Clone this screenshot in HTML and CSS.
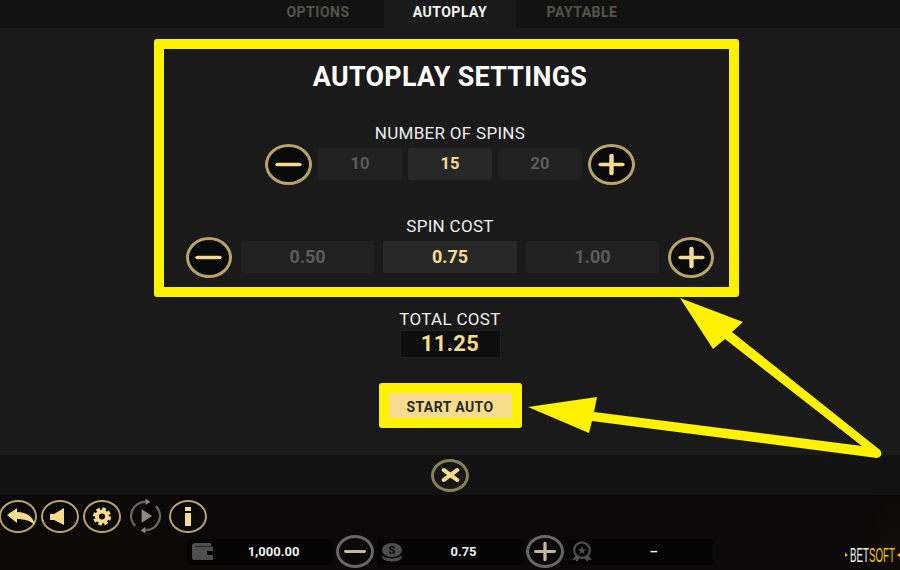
FILE: index.html
```html
<!DOCTYPE html>
<html lang="en">
<head>
    <meta charset="UTF-8">
    <title>Autoplay Settings</title>
    <link rel="stylesheet" href="styles.css">
</head>
<body>
    <div class="tabs">
        <div class="tab">OPTIONS</div>
        <div class="tab active">AUTOPLAY</div>
        <div class="tab">PAYTABLE</div>
    </div>

    <div class="main">
        <div class="panel">
            <h2>AUTOPLAY SETTINGS</h2>

            <div class="label spins-label">NUMBER OF SPINS</div>
            <div class="stepper">
                <div class="round"><svg viewBox="0 0 24 24" preserveAspectRatio="none"><path d="M4 12h16"/></svg></div>
                <div class="cell">10</div>
                <div class="cell current">15</div>
                <div class="cell">20</div>
                <div class="round"><svg viewBox="0 0 24 24" preserveAspectRatio="none"><path d="M4 12h16M12 4v16"/></svg></div>
            </div>

            <div class="label cost-label">SPIN COST</div>
            <div class="stepper wide">
                <div class="round"><svg viewBox="0 0 24 24" preserveAspectRatio="none"><path d="M4 12h16"/></svg></div>
                <div class="cell">0.50</div>
                <div class="cell current">0.75</div>
                <div class="cell">1.00</div>
                <div class="round"><svg viewBox="0 0 24 24" preserveAspectRatio="none"><path d="M4 12h16M12 4v16"/></svg></div>
            </div>
        </div>

        <div class="label total-label">TOTAL COST</div>
        <div class="total">11.25</div>

        <div class="start-frame"><div class="start">START AUTO</div></div>
    </div>

    <div class="close-strip">
        <div class="round small"><svg viewBox="0 0 24 24" preserveAspectRatio="none"><path d="M6 7l12 10M18 7L6 17"/></svg></div>
    </div>

    <div class="bottom">
        <div class="tools">
            <div class="round tool">
                <svg viewBox="0 0 34 29"><path class="fill" d="M6 13L16 6v4c10 0 16 5 18 13-4-4-11-6-18-6v4z"/></svg>
            </div>
            <div class="round tool">
                <svg viewBox="0 0 34 29"><path class="fill" d="M7 12h4L21 6v17L11 18H7z"/></svg>
            </div>
            <div class="round tool">
                <svg viewBox="0 0 34 29">
                    <circle class="gear-ring" cx="17" cy="14.500" r="5"/>
                    <circle class="gear-teeth" cx="17" cy="14.500" r="7.300"/>
                </svg>
            </div>
            <div class="auto">
                <svg viewBox="0 0 38 38" preserveAspectRatio="none">
                    <path class="auto-line" d="M8.500 29.500A15 15 0 0 1 19 4M29.500 8.500A15 15 0 0 1 19 34"/>
                    <path class="auto-mark" d="M19 .5l5 3.500-5 3.500zM19 30.500l-5 3.500 5 3.500zM15 12l11 7-11 7z"/>
                </svg>
            </div>
            <div class="round tool">
                <svg viewBox="0 0 34 29"><path class="fill" d="M14 5h6v4h-6zM14 11h6v13h-6z"/></svg>
            </div>
        </div>

        <div class="bet-row">
            <div class="pill">
                <svg class="pill-icon" viewBox="0 0 24 20"><path class="grey" d="M2 3.500C2 2 3 1 5 1h16v3H5v.5h18V18H4c-1.500 0-2-1-2-2.500zM17 9v4h6V9z"/></svg>
                <span>1,000.00</span>
            </div>
            <div class="round dim"><svg viewBox="0 0 24 24" preserveAspectRatio="none"><path d="M4 12h16"/></svg></div>
            <div class="pill">
                <svg class="pill-icon" viewBox="0 0 24 20">
                    <ellipse class="grey" cx="12" cy="15" rx="10" ry="4.500"/>
                    <ellipse class="coin-gap" cx="12" cy="12" rx="10" ry="4.500"/>
                    <ellipse class="grey" cx="12" cy="8" rx="10" ry="7"/>
                    <text class="coin-s" x="12" y="12">S</text>
                </svg>
                <span>0.75</span>
            </div>
            <div class="round dim"><svg viewBox="0 0 24 24" preserveAspectRatio="none"><path d="M4 12h16M12 4v16"/></svg></div>
            <div class="pill">
                <svg class="pill-icon" viewBox="0 0 24 24">
                    <path class="grey" d="M6 15l-5 6 4-.5 1.500 2.500L10 18zM18 15l5 6-4-.5-1.500 2.500L14 18z"/>
                    <circle class="award" cx="12" cy="10" r="8.500"/>
                    <path class="grey" d="M12 6l1.300 2.700 3 .4-2.200 2 .6 3-2.700-1.500-2.700 1.500.6-3-2.200-2 3-.4z"/>
                </svg>
                <span>–</span>
            </div>
        </div>

        <div class="logo"><i class="logo-tick"></i><span class="logo-word">BET<b>SOFT</b></span><i class="logo-tick flip"></i></div>
    </div>

    <svg class="notes" viewBox="0 0 900 570">
        <path d="M680 298L743 322 732 332 880 450Q884 456 877 458L592 421 589 433 528 407 597 397 594 412 862 446 725 339 713 349Z"/>
    </svg>
</body>
</html>
```

FILE: styles.css
```css
* { margin: 0; padding: 0; box-sizing: border-box; }
body { width: 900px; height: 570px; overflow: hidden; position: relative; font-family: "Roboto", sans-serif; background: #1a1a1a; color: #f0f0f0; }

/* Tabs */
.tabs { display: flex; justify-content: center; height: 28px; background: #121212; }
.tab { width: 132px; text-align: center; font-size: 14px; font-weight: 700; line-height: 24px; letter-spacing: 0.5px; color: #55534a; }
.tab.active { background: #1a1a1a; color: #f4f4f4; }

/* Main */
.main { height: 427px; display: flex; flex-direction: column; align-items: center; padding-top: 11px; background: #1a1a1a; }
.panel { width: 585px; height: 258px; margin-right: 7px; padding-left: 7px; border: 10px solid #fff200; border-radius: 3px; display: flex; flex-direction: column; align-items: center; }
.panel h2 { font-size: 26.800px; font-weight: 700; line-height: 30px; margin-top: 13px; letter-spacing: 0.35px; color: #fff; }
.label { font-size: 17px; line-height: 18px; letter-spacing: 0.3px; text-align: center; color: #eee; }
.spins-label { margin-top: 32px; }
.cost-label { margin-top: 30px; }
.total-label { margin-top: 13px; }

.stepper { display: flex; align-items: center; gap: 6px; height: 46px; margin-top: -1px; }
.stepper .cell { width: 84px; height: 32px; background: #212121; border-radius: 2px; color: #5c5c5c; font-size: 16.500px; font-weight: 700; line-height: 32px; text-align: center; }
.stepper .cell.current { background: #282828; color: #f8dc8e; }
.wide { gap: 9px; }
.stepper.wide .cell { width: 133.500px; font-size: 18px; }
.wide .round { width: 46px; }

/* circles are a little squashed in the source picture */
.round { width: 47px; height: 41px; flex: none; border: 3px solid #b8a468; border-radius: 50%; background: #0a0a0a; display: flex; align-items: center; justify-content: center; }
.round svg { width: 33px; height: 27px; flex: none; fill: none; stroke: #f8dc8e; stroke-width: 3.200; stroke-linecap: round; }
.round.small { width: 38px; height: 33px; background: #161616; border-color: #8d7f55; }
.round.small svg { width: 27px; height: 24px; stroke-width: 3.800; }

.total { width: 101px; height: 28px; margin-top: 2px; background: #0e0e0e; border: 1px solid #202020; border-radius: 2px; color: #f8dc8e; font-size: 22px; font-weight: 700; line-height: 26px; letter-spacing: 0.3px; text-align: center; }
.start-frame { margin-top: 25px; border: 10px solid #fff200; border-radius: 3px; }
.start { width: 123px; height: 25px; background: #f8dc8e; color: #2a2a2a; font-size: 14px; font-weight: 700; line-height: 28px; letter-spacing: 0.4px; text-align: center; }

/* Close strip */
.close-strip { height: 40px; background: #121212; display: flex; align-items: center; justify-content: center; }

/* Bottom bar */
.bottom { height: 75px; position: relative; background: radial-gradient(ellipse 36px 70px at 895px 50px, #150e07, transparent), radial-gradient(ellipse 200px 60px at 60px 60px, #0f0a07, transparent), #0a0808; }
.tools { display: flex; gap: 4px; padding-top: 5px; margin-left: -1px; }
.round.tool { width: 38px; height: 33px; background: transparent; border-width: 2.500px; }
.round.tool svg { width: 34px; height: 29px; }
.tool .fill { fill: #f8dc8e; stroke: none; }
.round.tool .gear-ring { stroke: #f8dc8e; stroke-width: 4; }
.round.tool .gear-teeth { stroke: #f8dc8e; stroke-width: 3.500; stroke-dasharray: 3.500 2.230; stroke-linecap: butt; }
.auto { width: 37px; height: 36px; margin: -2px 1px -1px 2px; }
.auto svg { display: block; width: 37px; height: 36px; }
.auto-line { fill: none; stroke: #666; stroke-width: 2.500; }
.auto-mark { fill: #8a8a80; }

.bet-row { display: flex; align-items: center; gap: 3px; margin-left: 187px; margin-top: 2px; }
.pill { width: 146px; height: 26px; background: #050505; border-radius: 3px; display: flex; align-items: center; color: #eee; font-size: 13px; font-weight: 700; }
.pill span { flex: 1; text-align: center; margin-top: -1px; }
.pill-icon { width: 24px; height: 22px; margin-left: 3px; flex: none; }
.grey { fill: #4e4e4e; }
.coin-gap { fill: #0a0a0a; }
.coin-s { fill: #0a0a0a; font-size: 11px; font-weight: 700; text-anchor: middle; }
.award { fill: none; stroke: #4e4e4e; stroke-width: 2.500; }
.round.dim { width: 38px; height: 33px; background: transparent; border-color: #666; }
.round.dim svg { width: 28px; height: 25px; stroke: #c2bb9b; stroke-width: 2.800; }

.logo { position: absolute; right: 0; bottom: 6px; display: flex; align-items: center; gap: 2px; }
.logo-word { display: inline-block; width: 45px; font-family: "Liberation Sans", sans-serif; font-size: 19.500px; line-height: 18px; color: #eee; transform: scaleX(0.5); transform-origin: left center; white-space: nowrap; }
.logo-word b { font-weight: 400; color: #f2c511; }
.logo-tick { width: 0; height: 0; border-left: 3px solid #f2c511; border-top: 2px solid transparent; border-bottom: 2px solid transparent; }
.logo-tick.flip { transform: scaleX(-1); }

/* Annotation arrows drawn over the screenshot */
.notes { position: absolute; left: 0; top: 0; width: 900px; height: 570px; pointer-events: none; }
.notes path { fill: #fff200; }
```
